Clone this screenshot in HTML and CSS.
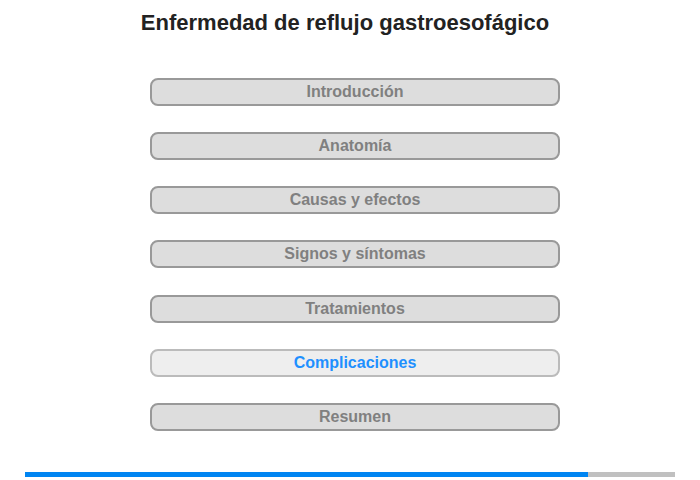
FILE: index.html
```html
<!DOCTYPE html>
<html lang="es">
<head>
    <meta charset="UTF-8">
    <meta name="viewport" content="width=device-width, initial-scale=1.0">
    <title>Enfermedad de reflujo gastroesofágico</title>
    <link rel="stylesheet" href="styles.css">
</head>
<body>
    <!-- Titre -->
    <h1 class="titulo">Enfermedad de reflujo gastroesofágico</h1>

    <!-- Menu des chapitres -->
    <div class="menu">
        <div class="capitulo">Introducción</div>
        <div class="capitulo">Anatomía</div>
        <div class="capitulo">Causas y efectos</div>
        <div class="capitulo">Signos y síntomas</div>
        <div class="capitulo">Tratamientos</div>
        <div class="capitulo activo">Complicaciones</div>
        <div class="capitulo">Resumen</div>
    </div>

    <!-- Barre de progression -->
    <div class="progreso">
        <div class="progreso-barra" style="width: 86.6%"></div>
    </div>
</body>
</html>
```

FILE: styles.css
```css
body {
    margin: 0;
    background-color: #fff;
    font-family: "Liberation Sans", Arial, sans-serif;
}
.titulo {
    margin: 0;
    padding: 9px 10px 0 0;
    height: 69px;
    box-sizing: border-box;
    text-align: center;
    font-size: 22px;
    line-height: 27px;
    color: #222;
}
.menu {
    display: flex;
    flex-direction: column;
    gap: 26.17px;
    margin-left: 150px;
    width: 410px;
    padding-top: 9px;
}
.capitulo {
    height: 28px;
    box-sizing: border-box;
    border: 2px solid #999;
    border-radius: 8px;
    background-color: #ddd;
    color: #808080;
    font-weight: bold;
    font-size: 16px;
    line-height: 24px;
    text-align: center;
}
.capitulo.activo {
    background-color: #eee;
    border-color: #bbb;
    color: #1e90ff;
}
.progreso {
    margin: 41px 25px 0;
    height: 5px;
    background-color: #c0c0c0;
}
.progreso-barra {
    height: 100%;
    background-color: #0085f2;
}
```
